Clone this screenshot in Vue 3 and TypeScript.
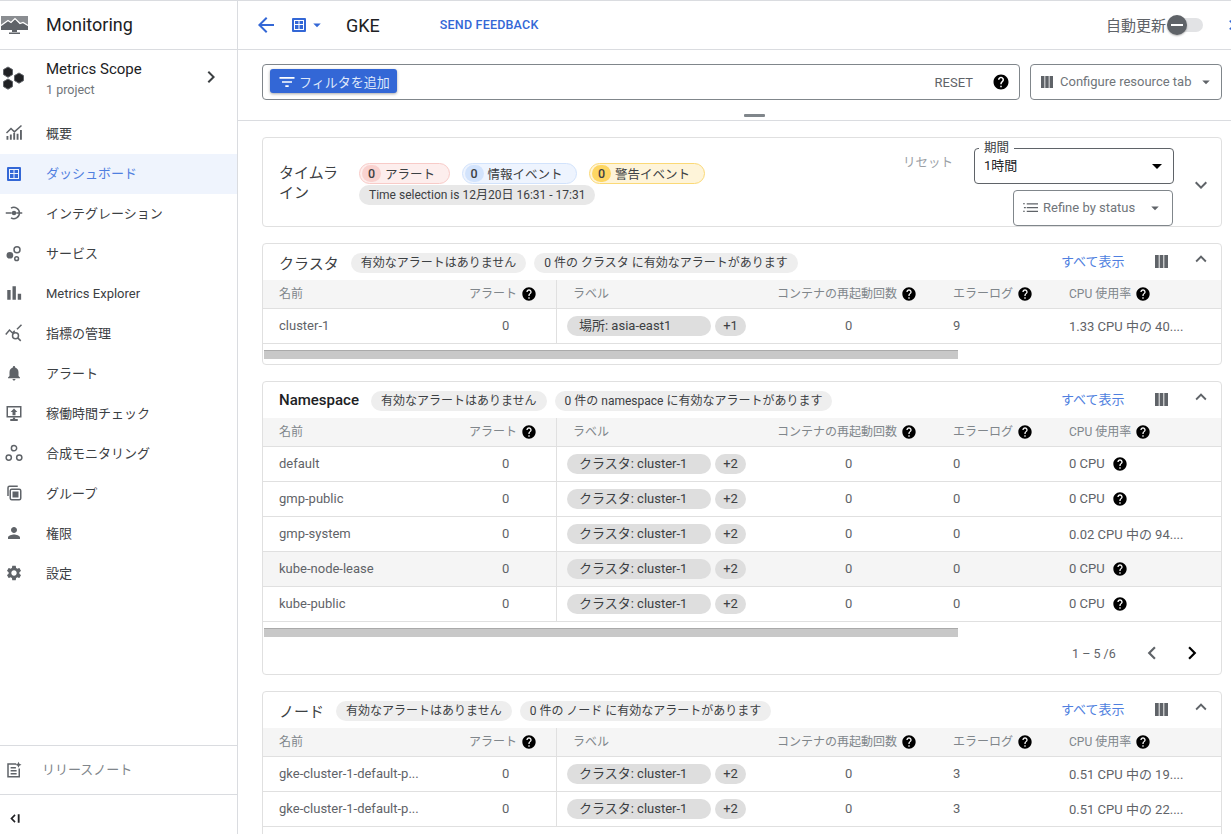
<script setup lang="ts">
interface NavItem { label: string; fill?: string; stroke?: string; active?: boolean; latin?: boolean }
interface Row { name: string; alert: string; label: string; more: string; restarts: string; errors: string; cpu: string; help?: boolean; hover?: boolean }
interface Section { title: string; bold?: boolean; chip2: string; rows: Row[]; pager?: boolean; scroll: boolean; continues?: boolean }

const nav: NavItem[] = [
  { label: '概要', fill: 'M2 21v-5h2.500v5zM6.500 21v-7H9v7zM11 21v-9h2.500v9zM15.500 21v-8H18v8zM20 21V8h2.500v13z', stroke: 'M2 12l6-6 4.500 4.500L22 2' },
  { label: 'ダッシュボード', active: true },
  { label: 'インテグレーション', fill: 'M9 12a3 3 0 1 0 6 0a3 3 0 1 0-6 0z', stroke: 'M1 12h8M15 12h8M8 5.500a7.500 7.500 0 1 1 0 13' },
  { label: 'サービス', fill: 'M2 15a4.500 4.500 0 1 0 9 0a4.500 4.500 0 1 0-9 0z', stroke: 'M12 7.500a4 4 0 1 0 8 0a4 4 0 1 0-8 0zM13 19.500a2.500 2.500 0 1 0 5 0a2.500 2.500 0 1 0-5 0z' },
  { label: 'Metrics Explorer', latin: true, fill: 'M3 8h4.500v13H3zM10 3h4.500v18H10zM17 13h4.500v8H17z' },
  { label: '指標の管理', stroke: 'M1 14l5-6 4 4 3-3M16 7l6-6M10 15.500a4 4 0 1 0 8 0a4 4 0 1 0-8 0zM17 18.500l4 4' },
  { label: 'アラート', fill: 'M12 22c1.100 0 2-.9 2-2h-4c0 1.100.89 2 2 2zm6-6v-5c0-3.070-1.640-5.640-4.500-6.320V4c0-.83-.67-1.500-1.500-1.500s-1.500.67-1.500 1.500v.68C7.630 5.360 6 7.920 6 11v5l-2 2v1h16v-1l-2-2z' },
  { label: '稼働時間チェック', fill: 'M12 6l4.500 4.500H14V15h-4v-4.500H7.500zM7 20h10v2.500H7zM10.500 18h3v3h-3z', stroke: 'M3 3.500h18V17H3z' },
  { label: '合成モニタリング', stroke: 'M8.500 5.500a3.500 3.500 0 1 0 7 0a3.500 3.500 0 1 0-7 0zM1.500 18a3.500 3.500 0 1 0 7 0a3.500 3.500 0 1 0-7 0zM15.500 18a3.500 3.500 0 1 0 7 0a3.500 3.500 0 1 0-7 0z' },
  { label: 'グループ', fill: 'M10 10h8v8h-8z', stroke: 'M4 16V5a2 2 0 0 1 2-2h11M9 7h10a2 2 0 0 1 2 2v10a2 2 0 0 1-2 2H9a2 2 0 0 1-2-2V9a2 2 0 0 1 2-2z' },
  { label: '権限', fill: 'M12 12c2.210 0 4-1.790 4-4s-1.790-4-4-4-4 1.790-4 4 1.790 4 4 4zm0 2c-2.670 0-8 1.340-8 4v2h16v-2c0-2.660-5.330-4-8-4z' },
  { label: '設定', fill: 'M19.140 12.940c.04-.3.06-.61.06-.94 0-.32-.02-.64-.07-.94l2.030-1.580c.18-.14.23-.41.12-.61l-1.920-3.320c-.12-.22-.37-.29-.59-.22l-2.390.96c-.5-.38-1.030-.7-1.620-.94l-.36-2.540c-.04-.24-.24-.41-.48-.41h-3.840c-.24 0-.43.17-.47.41l-.36 2.540c-.59.24-1.130.57-1.620.94l-2.390-.96c-.22-.08-.47 0-.59.22L2.740 8.870c-.12.21-.08.47.12.61l2.030 1.580c-.05.3-.09.63-.09.94s.02.64.07.94l-2.030 1.580c-.18.14-.23.41-.12.61l1.920 3.320c.12.22.37.29.59.22l2.390-.96c.5.38 1.030.7 1.620.94l.36 2.540c.05.24.24.41.48.41h3.840c.24 0 .44-.17.47-.41l.36-2.540c.59-.24 1.130-.56 1.620-.94l2.390.96c.22.08.47 0 .59-.22l1.920-3.320c.12-.22.07-.47-.12-.61l-2.010-1.580zM12 15.600c-1.980 0-3.600-1.620-3.600-3.600s1.620-3.600 3.600-3.600 3.600 1.620 3.600 3.600-1.620 3.600-3.600 3.600z' }
];

const ns = (name: string, cpu: string, help: boolean, hover = false): Row => ({
  name, alert: '0', label: 'クラスタ: cluster-1', more: '+2', restarts: '0', errors: '0', cpu, help, hover
});

const sections: Section[] = [
  {
    title: 'クラスタ', chip2: '0 件の クラスタ に有効なアラートがあります', scroll: true,
    rows: [{ name: 'cluster-1', alert: '0', label: '場所: asia-east1', more: '+1', restarts: '0', errors: '9', cpu: '1.33 CPU 中の 40....' }]
  },
  {
    title: 'Namespace', bold: true, chip2: '0 件の namespace に有効なアラートがあります', scroll: true, pager: true,
    rows: [
      ns('default', '0 CPU', true),
      ns('gmp-public', '0 CPU', true),
      ns('gmp-system', '0.02 CPU 中の 94....', false),
      ns('kube-node-lease', '0 CPU', true, true),
      ns('kube-public', '0 CPU', true)
    ]
  },
  {
    title: 'ノード', chip2: '0 件の ノード に有効なアラートがあります', scroll: false, continues: true,
    rows: [
      { name: 'gke-cluster-1-default-p...', alert: '0', label: 'クラスタ: cluster-1', more: '+2', restarts: '0', errors: '3', cpu: '0.51 CPU 中の 19....' },
      { name: 'gke-cluster-1-default-p...', alert: '0', label: 'クラスタ: cluster-1', more: '+2', restarts: '0', errors: '3', cpu: '0.51 CPU 中の 22....' }
    ]
  }
];
</script>

<template>
  <div class="page">
    <svg class="defs" width="0" height="0" aria-hidden="true">
      <symbol id="help" viewBox="0 0 24 24"><path d="M12 2C6.480 2 2 6.480 2 12s4.480 10 10 10 10-4.480 10-10S17.520 2 12 2zm1 17h-2v-2h2v2zm2.070-7.750l-.9.92C13.450 12.900 13 13.500 13 15h-2v-.5c0-1.100.45-2.100 1.170-2.830l1.240-1.260c.37-.36.59-.86.59-1.410 0-1.100-.9-2-2-2s-2 .9-2 2H8c0-2.210 1.790-4 4-4s4 1.790 4 4c0 .88-.36 1.680-.93 2.250z" /></symbol>
      <symbol id="drop" viewBox="0 0 24 24"><path d="M7 10l5 5 5-5z" /></symbol>
      <symbol id="cols" viewBox="0 0 14 14"><path d="M0 0h4v14H0zM5 0h4v14H5zM10 0h4v14h-4z" /></symbol>
      <symbol id="up" viewBox="0 0 24 24"><path d="M12 8l-6 6 1.410 1.410L12 10.830l4.590 4.580L18 14z" /></symbol>
      <symbol id="dash" viewBox="0 0 14 14"><path fill-rule="evenodd" d="M1 0h12a1 1 0 0 1 1 1v12a1 1 0 0 1-1 1H1a1 1 0 0 1-1-1V1a1 1 0 0 1 1-1zM2 2v10h10V2zM3 3h3.500v3H3zM7.500 3H11v3H7.500zM3 7h3.500v4H3zM7.500 7H11v4H7.500z" /></symbol>
    </svg>

    <aside class="side">
      <div class="brand">
        <svg class="brand-logo" viewBox="0 0 28 20">
          <path fill="#8a8d91" d="M1 1h27v10H1z" />
          <path fill="#5f6368" d="M1 11l7-5 3 2 4-4 5 5 3-1 5 3v4H1zM12 15h5v2h-5zM9 17.500h11V19H9z" />
          <path fill="none" stroke="#fff" stroke-width="1.200" d="M1 10.500l7-5 3 2 4-4 5 5 3-1 5 3" />
        </svg>
        <span>Monitoring</span>
      </div>
      <div class="scope">
        <svg class="hex" viewBox="0 0 24 24" fill="#5f6368" stroke="#5f6368" stroke-linejoin="round">
          <path d="M6 1l4.500 2.600v5L6 11.300 1.500 8.600v-5zM6 13l4.500 2.600v5L6 23.200l-4.500-2.600v-5zM17 7l4.500 2.600v5L17 17.200l-4.500-2.600v-5z" />
        </svg>
        <div class="scope-text">
          <div class="scope-title">Metrics Scope</div>
          <div class="scope-sub">1 project</div>
        </div>
        <svg class="scope-arrow" viewBox="0 0 24 24"><path d="M10 6L8.590 7.410 13.170 12l-4.580 4.590L10 18l6-6z" /></svg>
      </div>
      <nav class="nav">
        <div v-for="item in nav" :key="item.label" class="nav-item" :class="{ active: item.active }">
          <svg v-if="item.active" class="nav-dash"><use href="#dash" /></svg>
          <svg v-else class="nav-ic" viewBox="0 0 24 24">
            <path v-if="item.fill" :d="item.fill" fill="currentColor" />
            <path v-if="item.stroke" :d="item.stroke" fill="none" stroke="currentColor" stroke-width="2" />
          </svg>
          <span :class="{ cjk: !item.latin }">{{ item.label }}</span>
        </div>
      </nav>
      <div class="release">
        <svg class="nav-ic" viewBox="0 0 24 24">
          <path fill="none" stroke="currentColor" stroke-width="2" d="M15 4H4v17h15V10M7.500 9h7M7.500 13h8M7.500 17h8" />
          <path fill="currentColor" d="M18 1l1.200 2.800L22 5l-2.800 1.200L18 9l-1.200-2.800L14 5l2.800-1.200z" />
        </svg>
        <span>リリースノート</span>
      </div>
      <div class="collapse">
        <svg viewBox="0 0 14 14"><path d="M7 2.500L2.500 7 7 11.500l1.200-1.200L5 7l3.200-3.300zM10.500 2.500h2v9h-2z" /></svg>
      </div>
    </aside>

    <main class="main">
      <header class="top">
        <svg class="back" viewBox="0 0 24 24"><path d="M20 11H7.830l5.590-5.590L12 4l-8 8 8 8 1.410-1.410L7.830 13H20v-2z" /></svg>
        <svg class="top-dash"><use href="#dash" /></svg>
        <svg class="top-drop"><use href="#drop" /></svg>
        <h1>GKE</h1>
        <a class="feedback">SEND FEEDBACK</a>
        <div class="auto">
          <span>自動更新</span>
          <div class="toggle"><i class="knob"></i></div>
        </div>
        <svg class="edge" viewBox="0 0 24 24"><path d="M10 6L8.590 7.410 13.170 12l-4.580 4.590L10 18l6-6z" /></svg>
      </header>

      <section class="filters">
        <div class="filter-box">
          <button class="add">
            <svg viewBox="0 0 24 24"><path d="M10 18h4v-2h-4v2zM3 6v2h18V6H3zm3 7h12v-2H6v2z" /></svg>
            フィルタを追加
          </button>
          <span class="reset">RESET</span>
          <svg class="filter-help"><use href="#help" /></svg>
        </div>
        <div class="config">
          <svg class="cols"><use href="#cols" /></svg>
          <span>Configure resource tab</span>
          <svg class="config-drop"><use href="#drop" /></svg>
        </div>
        <i class="handle"></i>
      </section>

      <div class="content">
        <section class="card timeline">
          <h2 class="tl-title">タイムライン</h2>
          <div class="tl-chips">
            <div class="tl-row">
              <span class="ev red"><b>0</b>アラート</span>
              <span class="ev blue"><b>0</b>情報イベント</span>
              <span class="ev yellow"><b>0</b>警告イベント</span>
            </div>
            <span class="time">Time selection is 12月20日 16:31 - 17:31</span>
          </div>
          <span class="tl-reset">リセット</span>
          <div class="tl-controls">
            <div class="period">
              <label>期間</label>
              <span>1時間</span>
              <svg><use href="#drop" /></svg>
            </div>
            <div class="refine">
              <svg class="refine-ic" viewBox="0 0 16 12"><path d="M0 1h2v1H0zM4 1h12v1.200H4zM1 5h2v1.200H1zM4 5h12v1.200H4zM0 9h2v1H0zM4 9h12v1.200H4z" /></svg>
              <span>Refine by status</span>
              <svg class="config-drop"><use href="#drop" /></svg>
            </div>
          </div>
          <svg class="tl-more" viewBox="0 0 24 24"><path d="M16.590 8.590L12 13.170 7.410 8.590 6 10l6 6 6-6z" /></svg>
        </section>

        <section v-for="s in sections" :key="s.title" class="card table-card">
          <div class="head">
            <h3 :class="{ bold: s.bold }">{{ s.title }}</h3>
            <span class="chip">有効なアラートはありません</span>
            <span class="chip">{{ s.chip2 }}</span>
            <a class="all">すべて表示</a>
            <svg class="cols head-cols"><use href="#cols" /></svg>
            <svg class="head-up"><use href="#up" /></svg>
          </div>
          <div class="grid thead">
            <div class="c">名前</div>
            <div class="c alert-h">アラート<svg class="q"><use href="#help" /></svg></div>
            <div class="c divided">ラベル</div>
            <div class="c">コンテナの再起動回数<svg class="q"><use href="#help" /></svg></div>
            <div class="c">エラーログ<svg class="q"><use href="#help" /></svg></div>
            <div class="c last"><span>CPU 使用率</span><svg class="q"><use href="#help" /></svg></div>
          </div>
          <div v-for="(r, i) in s.rows" :key="i" class="grid tr" :class="{ hover: r.hover }">
            <div class="c">{{ r.name }}</div>
            <div class="c alert-v">{{ r.alert }}</div>
            <div class="c divided labels">
              <span class="lab">{{ r.label }}</span>
              <span class="more">{{ r.more }}</span>
            </div>
            <div class="c restart-v">{{ r.restarts }}</div>
            <div class="c">{{ r.errors }}</div>
            <div class="c last">{{ r.cpu }}<svg v-if="r.help" class="q cpu-q"><use href="#help" /></svg></div>
          </div>
          <div v-if="s.continues" class="continues"></div>
          <div v-if="s.scroll" class="scroll"><i></i></div>
          <div v-if="s.pager" class="pager">
            <span>1 – 5 /6</span>
            <svg class="prev" viewBox="0 0 24 24"><path d="M15.410 7.410L14 6l-6 6 6 6 1.410-1.410L10.830 12z" /></svg>
            <svg class="next" viewBox="0 0 24 24"><path d="M10 6L8.590 7.410 13.170 12l-4.580 4.590L10 18l6-6z" /></svg>
          </div>
        </section>
      </div>
    </main>
  </div>
</template>

<style>
html, body { margin: 0; padding: 0; overflow: hidden; background: #fff; }
</style>

<style scoped>
.page {
  display: flex;
  width: 1231px;
  height: 834px;
  overflow: hidden;
  box-sizing: border-box;
  border-top: 1px solid #dadce0;
  font-family: Roboto, "Noto Sans CJK JP", sans-serif;
  font-size: 13px;
  color: #202124;
  background: #fff;
}
.defs { position: absolute; }
svg { display: block; flex: none; fill: currentColor; }

.side {
  width: 238px;
  flex: none;
  box-sizing: border-box;
  border-right: 1px solid #dadce0;
  display: flex;
  flex-direction: column;
  height: 833px;
}
.brand {
  height: 48px;
  flex: none;
  display: flex;
  align-items: center;
  border-bottom: 1px solid #dadce0;
  font-size: 18px;
  color: #202124;
}
.brand-logo { width: 28px; height: 20px; margin: 0 18px 0 0; }
.brand span { margin-bottom: 2px; }
.scope { height: 64px; flex: none; display: flex; align-items: flex-start; padding-top: 8px; box-sizing: border-box; }
.hex { width: 24px; height: 24px; margin: 8px 0 0 2px; }
.scope-text { margin-left: 20px; flex: 1; }
.scope-title { font-size: 15px; line-height: 20px; margin-top: 1px; color: #202124; }
.scope-sub { font-size: 12.500px; line-height: 20px; margin-top: 1px; color: #70757a; }
.scope-arrow { width: 24px; height: 24px; margin: 7px 14px 0 0; color: #3c4043; }
.nav { flex: 1; }
.nav-item {
  height: 40px;
  box-sizing: border-box;
  padding-bottom: 2px;
  display: flex;
  align-items: center;
  color: #3c4043;
  font-size: 13px;
}
.nav-item .cjk { margin-bottom: 2px; }
.nav-item.active { background: #eff4fd; color: #4f7fe0; }
.nav-ic { width: 18px; height: 18px; margin: 0 23px 0 5px; color: #5f6368; }
.nav-dash { width: 14px; height: 14px; margin: 2px 25px 0 7px; color: #3367d6; }
.release {
  flex: none;
  box-sizing: border-box;
  border-top: 1px solid #dadce0;
  border-bottom: 1px solid #dadce0;
  display: flex;
  align-items: center;
  color: #80868b;
  height: 50px;
}
.release .nav-ic { margin-right: 14px; width: 18px; }
.release span { margin: 0 0 3px 5px; }
.collapse { height: 39px; flex: none; display: flex; align-items: center; padding: 7px 0 0 8px; box-sizing: border-box; }
.collapse svg { width: 13px; height: 13px; color: #202124; }

.main { flex: 1; min-width: 0; position: relative; }
.top {
  height: 48px;
  box-sizing: content-box;
  border-bottom: 1px solid #dadce0;
  display: flex;
  align-items: center;
}
.back { width: 24px; height: 24px; margin-left: 16px; color: #3367d6; }
.top-dash { width: 14px; height: 14px; margin-left: 14px; color: #3367d6; }
.top-drop { width: 18px; height: 18px; margin-left: 2px; color: #3367d6; }
.top h1 { font-size: 18px; font-weight: 400; margin: 0 0 0 20px; color: #202124; }
.feedback { margin: 0 0 1px 60px; font-size: 12.500px; font-weight: 500; color: #3367d6; letter-spacing: .2px; }
.auto { margin-left: auto; display: flex; align-items: center; font-size: 15px; color: #5f6368; }
.auto span { margin: 0 2px 2px 0; }
.toggle { width: 35px; height: 14px; border-radius: 7px; background: #e2e3e5; position: relative; }
.knob {
  position: absolute;
  left: -1px;
  top: -3px;
  width: 20px;
  height: 20px;
  border-radius: 50%;
  background: #5f6368 linear-gradient(#fff, #fff) center / 12px 2px no-repeat;
  box-shadow: 0 1px 2px rgba(0, 0, 0, .3);
}
.edge { width: 20px; height: 20px; margin-left: 19px; margin-right: -11px; color: #3367d6; }

.filters {
  position: relative;
  height: 70px;
  box-sizing: content-box;
  border-bottom: 1px solid #dadce0;
  display: flex;
  padding: 0 9px 0 24px;
  gap: 10px;
  align-items: flex-start;
}
.filter-box {
  margin-top: 14px;
  width: 758px;
  height: 36px;
  box-sizing: border-box;
  border: 1px solid #80868b;
  border-radius: 4px;
  display: flex;
  align-items: center;
  padding: 0 9px 0 7px;
  flex: none;
}
.add {
  height: 24px;
  width: 127px;
  border: 0;
  border-radius: 3px;
  background: #3367d6;
  color: #dfe8fa;
  font: inherit;
  font-size: 13px;
  display: flex;
  align-items: center;
  padding: 0 0 0 7px;
  margin-top: -2px;
  box-shadow: 0 1px 3px rgba(0, 0, 0, .35);
}
.add svg { width: 20px; height: 20px; color: #fff; margin: 2px 2px 0 0; }
.reset { margin-left: auto; font-size: 13px; font-weight: 400; color: #5f6368; }
.filter-help { width: 18px; height: 18px; color: #000; margin-left: 19px; }
.config {
  margin-top: 14px;
  width: 192px;
  height: 36px;
  box-sizing: border-box;
  border: 1px solid #80868b;
  border-radius: 4px;
  display: flex;
  align-items: center;
  padding: 0 6px 0 10px;
  color: #70757a;
  font-size: 13px;
}
.config span { margin-bottom: 2px; }
.cols { width: 12px; height: 12px; color: #5f6368; margin-right: 7px; }
.config-drop { width: 18px; height: 18px; color: #5f6368; margin-left: auto; }
.handle { position: absolute; left: 506px; top: 64px; width: 21px; height: 3px; background: #80868b; border-radius: 1px; }

.content { padding: 16px 9px 0 24px; display: flex; flex-direction: column; gap: 16px; }
.card { width: 960px; box-sizing: border-box; border: 1px solid #e0e0e0; border-radius: 4px; background: #fff; flex: none; }

.timeline { height: 90px; display: flex; align-items: flex-start; position: relative; }
.tl-title { width: 62px; margin: 25px 0 0 16px; font-size: 15px; line-height: 20px; font-weight: 400; color: #3c4043; }
.tl-chips { margin: 25px 0 0 18px; display: flex; flex-direction: column; align-items: flex-start; }
.tl-row { display: flex; gap: 12px; }
.ev {
  height: 21px;
  box-sizing: border-box;
  display: flex;
  align-items: center;
  border-radius: 11px;
  border: 1px solid;
  padding: 0 13.500px 0 2px;
  color: #3c4043;
  font-size: 12.500px;
}
.ev b {
  width: 19px;
  height: 17px;
  line-height: 17px;
  border-radius: 9px;
  text-align: center;
  font-weight: 500;
  margin-right: 4px;
  font-size: 12.500px;
}
.red { background: #fdeeed; border-color: #f8cbc8; }
.red b { background: #f9d2cf; }
.blue { background: #eef4fe; border-color: #d2e3fc; }
.blue b { background: #d2e3fc; }
.yellow { background: #fef4d9; border-color: #fbd976; }
.yellow b { background: #fdd663; }
.time {
  height: 20px;
  line-height: 20px;
  margin-top: 1px;
  padding: 0 10px;
  background: #e8e8e8;
  border-radius: 10px;
  font-size: 12px;
  color: #3c4043;
}
.tl-reset { position: absolute; left: 640px; top: 14px; color: #9aa0a6; font-size: 12.500px; }
.tl-controls { position: absolute; left: 711px; top: 10px; width: 200px; }
.period {
  width: 200px;
  height: 36px;
  box-sizing: border-box;
  border: 1px solid #5f6368;
  border-radius: 4px;
  position: relative;
  padding-left: 9px;
  line-height: 33px;
  font-size: 13px;
  color: #202124;
}
.period label {
  position: absolute;
  left: 4px;
  top: -8px;
  background: #fff;
  padding: 0 5px;
  font-size: 12.500px;
  line-height: 14px;
  color: #3c4043;
}
.period svg { position: absolute; right: 4px; top: 5px; width: 24px; height: 24px; color: #000; }
.refine {
  margin: 6px 0 0 39px;
  width: 160px;
  height: 36px;
  box-sizing: border-box;
  border: 1px solid #80868b;
  border-radius: 4px;
  display: flex;
  align-items: center;
  padding: 0 8px 0 9px;
  color: #70757a;
  font-size: 13px;
}
.refine span { margin-bottom: 2px; }
.refine-ic { width: 15px; height: 12px; margin-right: 5px; color: #5f6368; }
.tl-more { position: absolute; left: 926px; top: 35px; width: 24px; height: 24px; color: #5f6368; }

.head { height: 36px; display: flex; align-items: center; padding-left: 16px; position: relative; }
.head h3 { margin: 0 12px 0 0; font-size: 15px; font-weight: 400; color: #3c4043; }
.head h3.bold { font-weight: 500; color: #202124; font-size: 15px; }
.chip {
  height: 20px;
  line-height: 20px;
  margin: 2px 8px 0 0;
  padding: 0 10px;
  background: #eeeeee;
  border-radius: 10px;
  font-size: 12px;
  color: #3c4043;
}
.all { position: absolute; left: 798px; top: 7px; color: #4f7fe0; font-size: 13px; }
.head-cols { position: absolute; left: 892px; top: 11px; width: 13px; height: 13px; margin: 0; }
.head-up { position: absolute; left: 927px; top: 4px; width: 22px; height: 22px; color: #5f6368; }

.grid { display: grid; grid-template-columns: 187px 106px 205px 176px 115px 1fr; }
.c { padding-left: 16px; display: flex; align-items: center; white-space: nowrap; min-width: 0; }
.last { padding-left: 17px; }
.thead {
  height: 29px;
  box-sizing: border-box;
  background: #f5f5f5;
  border-bottom: 1px solid #e0e0e0;
  color: #80868b;
  font-size: 12px;
}
.thead .c { padding-bottom: 3px; }
.thead .q { margin-top: 3px; }
.alert-h { padding-left: 19px; }
.q { width: 16px; height: 16px; color: #000; margin-left: 4px; }
.divided { border-left: 1px solid #e0e0e0; }
.tr {
  height: 35px;
  box-sizing: border-box;
  border-bottom: 1px solid #e0e0e0;
  color: #5f6368;
  font-size: 13px;
}
.tr .c { padding-bottom: 1px; }
.tr.hover { background: #f5f5f5; }
.alert-v { padding-left: 52px; }
.restart-v { padding-left: 84px; }
.labels { padding-left: 10px; gap: 4px; }
.lab { width: 132px; height: 20px; line-height: 20px; padding-left: 12px; background: #dedede; border-radius: 10px; color: #3c4043; }
.more { width: 31px; height: 20px; line-height: 20px; text-align: center; background: #dedede; border-radius: 10px; color: #3c4043; }
.cpu-q { margin-left: 7px; }
.continues { height: 35px; }
.scroll { height: 20px; padding: 6px 0 0 1px; box-sizing: border-box; }
.scroll i { display: block; width: 694px; height: 9px; background: #c8c8c8; border-top: 1px solid #aaa; box-sizing: border-box; }
.pager { height: 22px; margin-bottom: 10px; display: flex; align-items: center; color: #5f6368; font-size: 12.500px; padding-left: 809px; }
.prev { width: 26px; height: 26px; margin-left: 23px; color: #5f6368; }
.next { width: 26px; height: 26px; margin-left: 14px; color: #000; }
</style>
